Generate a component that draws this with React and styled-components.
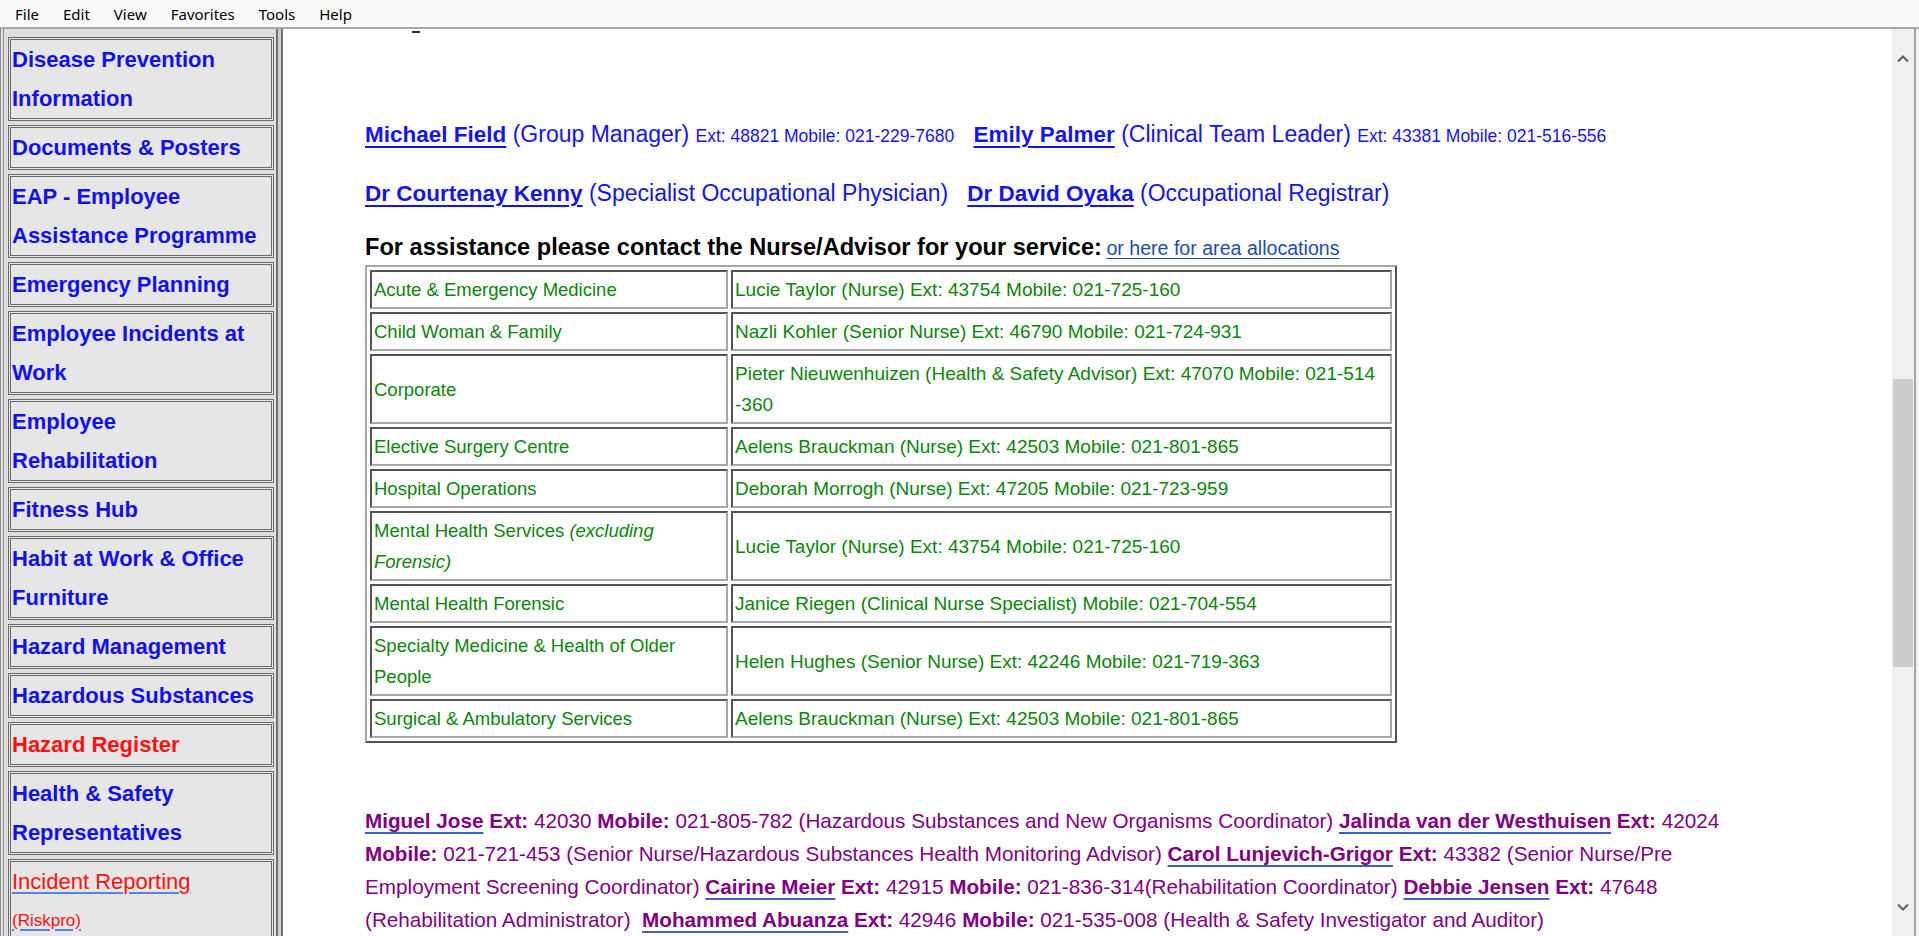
import React from 'react';
import styled, { createGlobalStyle } from 'styled-components';

const GlobalStyle = createGlobalStyle`
  html, body {
    margin: 0;
    padding: 0;
    overflow: hidden;
    background: #ffffff;
    font-family: "Liberation Sans", Arial, sans-serif;
  }
`;

const Window = styled.div`
  width: 100vw;
  height: 100vh;
  display: flex;
  flex-direction: column;
`;

const MenuBar = styled.div`
  height: 27px;
  flex-shrink: 0;
  display: flex;
  align-items: center;
  padding-left: 3px;
  background: #fafafa;
  border-bottom: 2px solid #a9a9a9;
  font-family: "Noto Sans", "Liberation Sans", sans-serif;
  font-size: 15px;
  color: #000;
`;

const MenuItem = styled.span`
  padding: 0 12px;
`;

const Frames = styled.div`
  flex: 1;
  min-height: 0;
  display: flex;
`;

const NavFrame = styled.div`
  width: 276px;
  box-sizing: border-box;
  flex-shrink: 0;
  display: flex;
  flex-direction: column;
  gap: 4px;
  padding: 8px 2px 0 4px;
  border-left: 4px double #8c8c8c;
  background: #dedede;
  overflow: hidden;
`;

const NavItem = styled.a`
  display: block;
  flex-shrink: 0;
  padding: 0 4px 0 1px;
  border: 3px double #6b6b6b;
  background: #e6e6e6;
  line-height: 39px;
  font-size: 22px;
  font-weight: ${(p) => (p.$plain ? 'normal' : 'bold')};
  color: ${(p) => (p.$red ? '#ff1010' : '#1010f4')};
  white-space: nowrap;
  text-decoration: none;
`;

const NavLine = styled.div`
  font-size: ${(p) => (p.$small ? '17px' : 'inherit')};
  span {
    text-decoration: ${(p) => (p.$under ? 'underline' : 'none')};
    text-decoration-color: #5584e6;
    text-decoration-thickness: 2px;
    text-underline-offset: 3px;
  }
`;

const FrameDivider = styled.div`
  width: 3px;
  flex-shrink: 0;
  border-left: 2px solid #717171;
  border-right: 2px solid #717171;
  background: #cfcfcf;
`;

const ContentFrame = styled.div`
  flex: 1;
  min-width: 0;
  padding: 2px 0 0 82px;
  overflow: hidden;
  background: #ffffff;
`;

const TopCut = styled.div`
  width: 8px;
  height: 2px;
  margin-left: 47px;
  background: #1c2a78;
`;

const ContactLine = styled.div`
  margin-top: ${(p) => p.$top}px;
  line-height: 30px;
  font-size: 23px;
  color: #1414ee;
  white-space: nowrap;
`;

const NameLink = styled.a`
  font-size: 22.5px;
  font-weight: bold;
  color: #1414ee;
  text-decoration: underline;
  text-decoration-thickness: 2px;
  text-underline-offset: 4px;
`;

const ExtText = styled.span`
  font-size: 17.5px;
`;

const HeadingLine = styled.div`
  margin-top: 23px;
  line-height: 30px;
  white-space: nowrap;
`;

const Heading = styled.span`
  font-size: 23.6px;
  font-weight: bold;
  color: #000;
`;

const AreaLink = styled.a`
  font-size: 19.6px;
  color: #1d4cb0;
  text-decoration: underline;
  text-underline-offset: 3px;
`;

const NurseTable = styled.table`
  width: 1032px;
  table-layout: fixed;
  border-collapse: separate;
  border-spacing: 3px;
  border: 2px outset #a8a8a8;
`;

const Cell = styled.td`
  width: ${(p) => p.$w}px;
  box-sizing: border-box;
  padding: 2px 2px;
  border: 2px inset #a8a8a8;
  line-height: 31px;
  font-size: ${(p) => p.$size}px;
  color: #0a860a;
  vertical-align: middle;
  white-space: nowrap;
  overflow: hidden;
`;

const StaffPara = styled.div`
  margin-top: 61px;
  line-height: 33px;
  font-size: 20.7px;
  color: #820082;
  white-space: nowrap;
`;

const StaffLink = styled.a`
  font-weight: bold;
  color: #820082;
  text-decoration: underline;
  text-decoration-color: #3c5fc4;
  text-decoration-thickness: 2px;
  text-underline-offset: 4px;
`;

const ScrollBar = styled.div`
  width: 22px;
  flex-shrink: 0;
  display: flex;
  flex-direction: column;
  align-items: center;
  background: #f0f0f0;
`;

const ScrollThumb = styled.div`
  width: 20px;
  height: 288px;
  margin-top: 315px;
  background: #cdcdcd;
`;

const ScrollSpacer = styled.div`
  flex: 1;
`;

const Chevron = styled.svg`
  width: 12px;
  height: 10px;
  flex-shrink: 0;
  margin-top: ${(p) => p.$top || 0}px;
  margin-bottom: ${(p) => p.$bottom || 0}px;
`;

const EdgeStrip = styled.div`
  width: 3px;
  flex-shrink: 0;
  border-left: 2px solid #a6a6a6;
  background: #f2f2f2;
`;

const navItems = [
  { lines: ['Disease Prevention', 'Information'] },
  { lines: ['Documents & Posters'] },
  { lines: ['EAP - Employee', 'Assistance Programme'] },
  { lines: ['Emergency Planning'] },
  { lines: ['Employee Incidents at', 'Work'] },
  { lines: ['Employee', 'Rehabilitation'] },
  { lines: ['Fitness Hub'] },
  { lines: ['Habit at Work & Office', 'Furniture'] },
  { lines: ['Hazard Management'] },
  { lines: ['Hazardous Substances'] },
  { lines: ['Hazard Register'], red: true },
  { lines: ['Health & Safety', 'Representatives'] },
];

const nurseRows = [
  ['Acute & Emergency Medicine', 'Lucie Taylor (Nurse) Ext: 43754 Mobile: 021-725-160'],
  ['Child Woman & Family', 'Nazli Kohler (Senior Nurse) Ext: 46790 Mobile: 021-724-931'],
  ['Corporate', <>Pieter Nieuwenhuizen (Health &amp; Safety Advisor) Ext: 47070 Mobile: 021-514<br />-360</>],
  ['Elective Surgery Centre', 'Aelens Brauckman (Nurse) Ext: 42503 Mobile: 021-801-865'],
  ['Hospital Operations', 'Deborah Morrogh (Nurse) Ext: 47205 Mobile: 021-723-959'],
  [<>Mental Health Services <i>(excluding<br />Forensic)</i></>, 'Lucie Taylor (Nurse) Ext: 43754 Mobile: 021-725-160'],
  ['Mental Health Forensic', 'Janice Riegen (Clinical Nurse Specialist) Mobile: 021-704-554'],
  [<>Specialty Medicine &amp; Health of Older<br />People</>, 'Helen Hughes (Senior Nurse) Ext: 42246 Mobile: 021-719-363'],
  ['Surgical & Ambulatory Services', 'Aelens Brauckman (Nurse) Ext: 42503 Mobile: 021-801-865'],
];

const menus = ['File', 'Edit', 'View', 'Favorites', 'Tools', 'Help'];

const ChevronIcon = ({ up, ...rest }) => (
  <Chevron viewBox="0 0 12 10" {...rest}>
    <path
      d={up ? 'M1 7.5 L6 2.5 L11 7.5' : 'M1 2.5 L6 7.5 L11 2.5'}
      fill="none"
      stroke="#5f5f5f"
      strokeWidth="2"
    />
  </Chevron>
);

const App = () => {
  return (
    <>
      <GlobalStyle />
      <Window>
        <MenuBar>
          {menus.map((m) => (
            <MenuItem key={m}>{m}</MenuItem>
          ))}
        </MenuBar>
        <Frames>
          <NavFrame>
            {navItems.map((item, idx) => (
              <NavItem key={`nav${idx}`} $red={item.red}>
                {item.lines.map((l) => (
                  <NavLine key={l}>{l}</NavLine>
                ))}
              </NavItem>
            ))}
            <NavItem $red $plain>
              <NavLine $under><span>Incident Reporting</span></NavLine>
              <NavLine $under $small><span>(Riskpro)</span></NavLine>
            </NavItem>
          </NavFrame>
          <FrameDivider />
          <ContentFrame>
            <TopCut />
            <ContactLine $top={86}>
              <NameLink>Michael Field</NameLink> (Group Manager) <ExtText>Ext: 48821 Mobile: 021-229-7680</ExtText>
              &nbsp;&nbsp;&nbsp;<NameLink>Emily Palmer</NameLink> (Clinical Team Leader) <ExtText>Ext: 43381 Mobile: 021-516-556</ExtText>
            </ContactLine>
            <ContactLine $top={27}>
              <NameLink>Dr Courtenay Kenny</NameLink> (Specialist Occupational Physician)&nbsp;&nbsp;&nbsp;
              <NameLink>Dr David Oyaka</NameLink> (Occupational Registrar)
            </ContactLine>
            <HeadingLine>
              <Heading>For assistance please contact the Nurse/Advisor for your service:</Heading>{' '}
              <AreaLink>or here for area allocations</AreaLink>
            </HeadingLine>
            <NurseTable>
              <tbody>
                {nurseRows.map((row, idx) => (
                  <tr key={`row${idx}`}>
                    <Cell $w={358} $size={18.5}>{row[0]}</Cell>
                    <Cell $w={661} $size={19}>{row[1]}</Cell>
                  </tr>
                ))}
              </tbody>
            </NurseTable>
            <StaffPara>
              <StaffLink>Miguel Jose</StaffLink> <b>Ext:</b> 42030 <b>Mobile:</b> 021-805-782 (Hazardous Substances and New Organisms Coordinator){' '}
              <StaffLink>Jalinda van der Westhuisen</StaffLink> <b>Ext:</b> 42024
              <br />
              <b>Mobile:</b> 021-721-453 (Senior Nurse/Hazardous Substances Health Monitoring Advisor){' '}
              <StaffLink>Carol Lunjevich-Grigor</StaffLink> <b>Ext:</b> 43382 (Senior Nurse/Pre
              <br />
              Employment Screening Coordinator) <StaffLink>Cairine Meier</StaffLink> <b>Ext:</b> 42915 <b>Mobile:</b> 021-836-314(Rehabilitation Coordinator){' '}
              <StaffLink>Debbie Jensen</StaffLink> <b>Ext:</b> 47648
              <br />
              (Rehabilitation Administrator)&nbsp; <StaffLink>Mohammed Abuanza</StaffLink> <b>Ext:</b> 42946 <b>Mobile:</b> 021-535-008 (Health &amp; Safety Investigator and Auditor)
            </StaffPara>
          </ContentFrame>
          <ScrollBar>
            <ChevronIcon up $top={25} />
            <ScrollThumb />
            <ScrollSpacer />
            <ChevronIcon $bottom={24} />
          </ScrollBar>
          <EdgeStrip />
        </Frames>
      </Window>
    </>
  );
};

export default App;
